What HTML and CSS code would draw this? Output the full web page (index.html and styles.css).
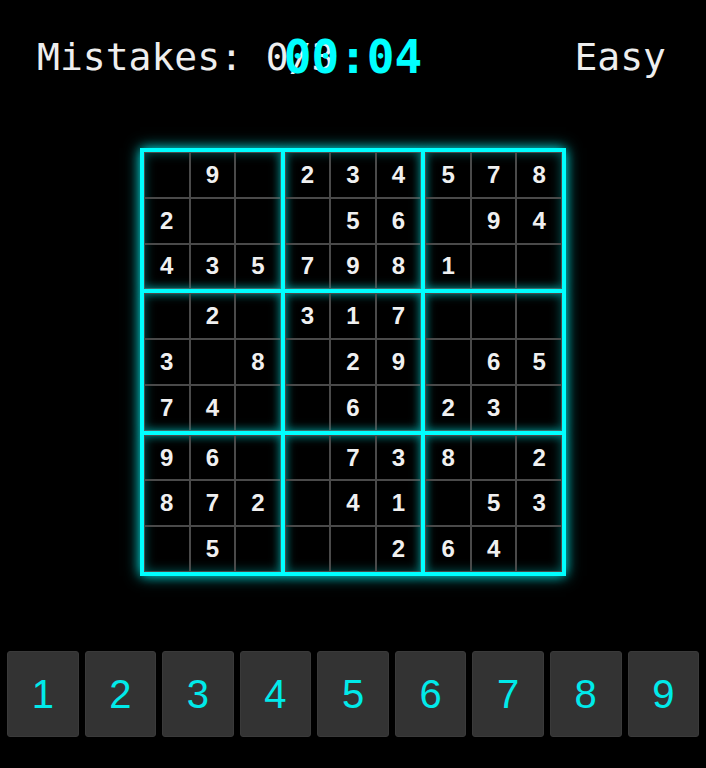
FILE: index.html
```html
<!DOCTYPE html>
<html lang="en">
<head>
    <meta charset="UTF-8">
    <meta name="viewport" content="width=device-width, initial-scale=1.0">
    <title>Sudoku</title>
    <link rel="stylesheet" href="styles.css">
</head>
<body>
    <div class="header">
        <span class="mistakes">Mistakes: 0/3</span>
        <span class="timer" id="timer">00:04</span>
        <span class="difficulty">Easy</span>
    </div>

    <div class="board" id="board"></div>

    <div class="numpad">
        <button>1</button>
        <button>2</button>
        <button>3</button>
        <button>4</button>
        <button>5</button>
        <button>6</button>
        <button>7</button>
        <button>8</button>
        <button>9</button>
    </div>

    <script>
        const puzzle = [
            '.9.234578',
            '2...56.94',
            '4357981..',
            '.2.317...',
            '3.8.29.65',
            '74..6.23.',
            '96..738.2',
            '872.41.53',
            '.5...264.'
        ];

        const board = document.getElementById('board');

        for (let b = 0; b < 9; b++) {
            const block = document.createElement('div');
            block.classList.add('block');
            for (let i = 0; i < 9; i++) {
                const row = Math.floor(b / 3) * 3 + Math.floor(i / 3);
                const col = (b % 3) * 3 + (i % 3);
                const cell = document.createElement('div');
                cell.classList.add('cell');
                const value = puzzle[row][col];
                cell.textContent = value === '.' ? '' : value;
                block.appendChild(cell);
            }
            board.appendChild(block);
        }
    </script>
</body>
</html>
```

FILE: styles.css
```css
body {
    margin: 0;
    background-color: #000;
    font-family: "DejaVu Sans Mono", monospace;
}
.header {
    position: relative;
    display: flex;
    justify-content: space-between;
    align-items: baseline;
    padding: 36px 40px 0 37px;
    font-size: 38px;
    line-height: 42px;
    color: #eee;
}
.timer {
    position: absolute;
    top: 34px;
    left: 50%;
    transform: translateX(-50%);
    font-size: 46px;
    line-height: 46px;
    font-weight: bold;
    color: #00ffff;
}
.board {
    box-sizing: border-box;
    width: 426px;
    height: 428px;
    margin: 70px auto 0;
    display: grid;
    grid-template-columns: repeat(3, 1fr);
    grid-template-rows: repeat(3, 1fr);
    border: 2px solid #00ffff;
    box-shadow: 0 0 14px rgba(0, 255, 255, 0.75);
}
.block {
    display: grid;
    grid-template-columns: repeat(3, 1fr);
    grid-template-rows: repeat(3, 1fr);
    border: 2px solid #00ffff;
    box-shadow: 0 0 10px rgba(0, 255, 255, 0.6), inset 0 0 12px rgba(0, 255, 255, 0.4);
}
.cell {
    display: flex;
    align-items: center;
    justify-content: center;
    border: 1px solid #4a4a4a;
    font-family: "Liberation Sans", Arial, sans-serif;
    font-weight: bold;
    font-size: 24px;
    color: #f0f0f0;
}
.numpad {
    display: flex;
    gap: 6px;
    padding: 0 7px;
    margin-top: 75px;
}
.numpad button {
    flex: 1;
    height: 86px;
    padding: 0;
    background-color: #333;
    border: 1px solid #3a3a3a;
    border-radius: 3px;
    font-family: "Liberation Sans", Arial, sans-serif;
    font-size: 40px;
    color: #00eaea;
    cursor: pointer;
}
```
